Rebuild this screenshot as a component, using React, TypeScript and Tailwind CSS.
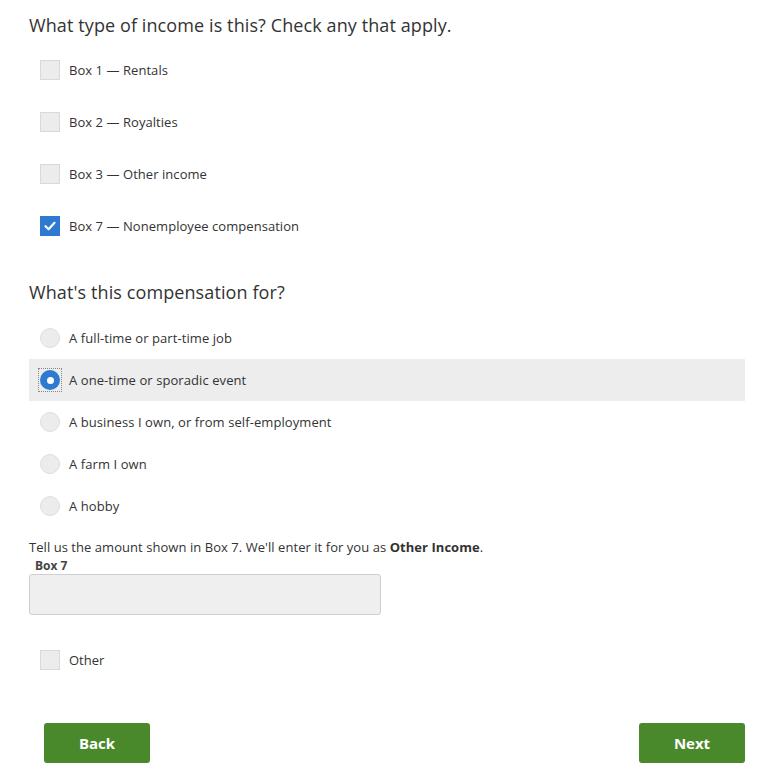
import React from "react";

const font = { fontFamily: '"Open Sans", "Noto Sans", sans-serif' };

function Checkbox({ checked }: { checked?: boolean }) {
  if (checked) {
    return (
      <span className="flex h-[20px] w-[20px] items-center justify-center bg-[#2d7ad0]">
        <svg width="14" height="14" viewBox="0 0 14 14">
          <path d="M2.5 7.2 L5.6 10.2 L11.5 3.8" fill="none" stroke="#fff" strokeWidth="2.2" strokeLinecap="round" strokeLinejoin="round" />
        </svg>
      </span>
    );
  }
  return <span className="block h-[20px] w-[20px] border border-[#d9d9d9] bg-[#ececec]" />;
}

function Radio({ checked }: { checked?: boolean }) {
  if (checked) {
    return (
      <span className="flex h-[22px] w-[22px] items-center justify-center outline outline-1 outline-dotted outline-[#888] -ml-[1px]">
        <span className="flex h-[20px] w-[20px] items-center justify-center rounded-full bg-[#2d7ad0]">
          <span className="block h-[7px] w-[7px] rounded-full bg-white" />
        </span>
      </span>
    );
  }
  return <span className="block h-[20px] w-[20px] rounded-full border border-[#dedede] bg-[#ececec]" />;
}

export default function App() {
  const checks = [
    { label: "Box 1 \u2014 Rentals", checked: false },
    { label: "Box 2 \u2014 Royalties", checked: false },
    { label: "Box 3 \u2014 Other income", checked: false },
    { label: "Box 7 \u2014 Nonemployee compensation", checked: true },
  ];
  const radios = [
    { label: "A full-time or part-time job", checked: false },
    { label: "A one-time or sporadic event", checked: true },
    { label: "A business I own, or from self-employment", checked: false },
    { label: "A farm I own", checked: false },
    { label: "A hobby", checked: false },
  ];
  return (
    <div className="min-h-[778px] w-[772px] bg-white text-[#333]" style={font}>
      <div className="ml-[29px] w-[716px] pt-[13px]">
        <h1 className="text-[18px] leading-[24px] tracking-[0.1px] text-[#333]">What type of income is this? Check any that apply.</h1>
        <div className="mt-[7px]">
          {checks.map((c) => (
            <div key={c.label} className="flex h-[52px] items-center pl-[11px]">
              <Checkbox checked={c.checked} />
              <span className="ml-[9px] text-[13px] leading-[18px] tracking-[0.05px]">{c.label}</span>
            </div>
          ))}
        </div>
        <h2 className="mt-[28px] text-[18px] leading-[24px] tracking-[0.1px] text-[#333]">What's this compensation for?</h2>
        <div className="mt-[13px]">
          {radios.map((r) => (
            <div
              key={r.label}
              className={`flex h-[42px] items-center pl-[11px] ${r.checked ? "bg-[#ededed]" : ""}`}
            >
              <Radio checked={r.checked} />
              <span className={`${r.checked ? "ml-[8px]" : "ml-[9px]"} text-[13px] leading-[18px] tracking-[0.08px]`}>{r.label}</span>
            </div>
          ))}
        </div>
        <p className="mt-[11px] text-[13px] leading-[18px] tracking-[0.05px]">
          Tell us the amount shown in Box 7. We'll enter it for you as <b className="font-bold">Other Income</b>.
        </p>
        <div className="ml-[6px] mt-[2px] text-[12px] font-bold leading-[16px] text-[#444]">Box 7</div>
        <div className="h-[41px] w-[352px] rounded-[3px] border border-[#cfcfcf] bg-[#efefef]" />
        <div className="mt-[19px] flex h-[52px] items-center pl-[11px]">
          <Checkbox />
          <span className="ml-[9px] text-[13px] leading-[18px]">Other</span>
        </div>
        <div className="mt-[37px] flex justify-between pl-[15px]">
          <button className="h-[40px] w-[106px] rounded-[3px] bg-[#4a892b] text-[15px] font-bold text-white">Back</button>
          <button className="h-[40px] w-[106px] rounded-[3px] bg-[#4a892b] text-[15px] font-bold text-white">Next</button>
        </div>
      </div>
    </div>
  );
}
